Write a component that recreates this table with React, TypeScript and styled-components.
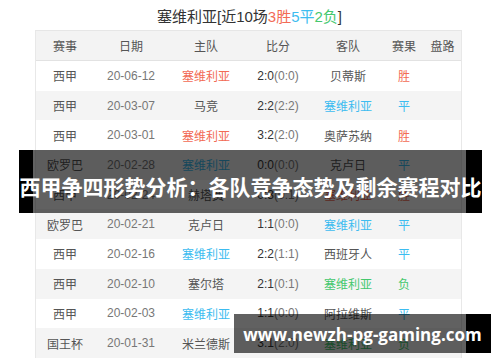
import styled, { createGlobalStyle } from "styled-components";

type Tone = "plain" | "win" | "draw" | "lose";

interface Match {
  league: string;
  date: string;
  home: string;
  homeTone: Tone;
  score: string;
  half: string;
  away: string;
  awayTone: Tone;
  result: string;
  resultTone: Tone;
}

const matches: Match[] = [
  { league: "西甲", date: "20-06-12", home: "塞维利亚", homeTone: "win", score: "2:0", half: "(0:0)", away: "贝蒂斯", awayTone: "plain", result: "胜", resultTone: "win" },
  { league: "西甲", date: "20-03-07", home: "马竞", homeTone: "plain", score: "2:2", half: "(2:2)", away: "塞维利亚", awayTone: "draw", result: "平", resultTone: "draw" },
  { league: "西甲", date: "20-03-01", home: "塞维利亚", homeTone: "win", score: "3:2", half: "(2:0)", away: "奥萨苏纳", awayTone: "plain", result: "胜", resultTone: "win" },
  { league: "欧罗巴", date: "20-02-28", home: "塞维利亚", homeTone: "draw", score: "0:0", half: "(0:0)", away: "克卢日", awayTone: "plain", result: "平", resultTone: "draw" },
  { league: "西甲", date: "20-02-24", home: "赫塔费", homeTone: "plain", score: "0:3", half: "(0:1)", away: "塞维利亚", awayTone: "win", result: "胜", resultTone: "win" },
  { league: "欧罗巴", date: "20-02-21", home: "克卢日", homeTone: "plain", score: "1:1", half: "(0:0)", away: "塞维利亚", awayTone: "draw", result: "平", resultTone: "draw" },
  { league: "西甲", date: "20-02-16", home: "塞维利亚", homeTone: "draw", score: "2:2", half: "(1:1)", away: "西班牙人", awayTone: "plain", result: "平", resultTone: "draw" },
  { league: "西甲", date: "20-02-10", home: "塞尔塔", homeTone: "plain", score: "2:1", half: "(0:1)", away: "塞维利亚", awayTone: "lose", result: "负", resultTone: "lose" },
  { league: "西甲", date: "20-02-03", home: "塞维利亚", homeTone: "draw", score: "1:1", half: "(0:0)", away: "阿拉维斯", awayTone: "plain", result: "平", resultTone: "draw" },
  { league: "国王杯", date: "20-01-31", home: "米兰德斯", homeTone: "plain", score: "3:1", half: "(2:0)", away: "塞维利亚", awayTone: "lose", result: "负", resultTone: "lose" },
];

const columns = "58px 74px 76px 68px 72px 40px 1fr";

export default function App() {
  return (
    <Page>
      <GlobalStyle />
      <Frame>
        <Title>
          塞维利亚[近10场<Colored $tone="win">3胜</Colored>
          <Colored $tone="draw">5平</Colored>
          <Colored $tone="lose">2负</Colored>]
        </Title>
        <Table>
          <HeadRow>
            <span>赛事</span>
            <span>日期</span>
            <span>主队</span>
            <span>比分</span>
            <span>客队</span>
            <span>赛果</span>
            <span>盘路</span>
          </HeadRow>
          {matches.map((m, i) => (
            <Row key={m.date} $striped={i % 2 === 1}>
              <Cell>{m.league}</Cell>
              <DateCell>{m.date}</DateCell>
              <Cell $tone={m.homeTone}>{m.home}</Cell>
              <Cell>
                <Score>{m.score}</Score>
                <Half>{m.half}</Half>
              </Cell>
              <Cell $tone={m.awayTone}>{m.away}</Cell>
              <Cell $tone={m.resultTone}>{m.result}</Cell>
              <Cell />
            </Row>
          ))}
        </Table>
      </Frame>

      <HeadlineBanner>
        <Strip $col={1} $dark />
        <Strip $col={2} />
        <Strip $col={3} $dark />
        <HeadlineText>西甲争四形势分析：各队竞争态势及剩余赛程对比</HeadlineText>
      </HeadlineBanner>

      <SiteBanner>
        <Strip $col={1} />
        <Strip $col={2} $dark />
        <SiteText>www.newzh-pg-gaming.com</SiteText>
      </SiteBanner>
    </Page>
  );
}

const toneColor: Record<Tone, string> = {
  plain: "#555",
  win: "#f26b55",
  draw: "#3dbcf0",
  lose: "#45c86e",
};

const GlobalStyle = createGlobalStyle`
  body {
    margin: 0;
    background: #fff;
    font-family: "Liberation Sans", "Noto Sans CJK SC", sans-serif;
  }
`;

const Page = styled.div`
  position: relative;
  width: 500px;
  height: 362px;
  overflow: hidden;
  background: #fff;
`;

const Frame = styled.div`
  width: 433px;
  margin-left: 33px;
`;

const Title = styled.div`
  height: 30px;
  line-height: 34px;
  text-align: center;
  font-size: 15px;
  color: #333;
`;

const Colored = styled.span<{ $tone: Tone }>`
  color: ${(p) => toneColor[p.$tone]};
`;

const Table = styled.div`
  margin: 0 4px 0 2px;
  border-left: 1px solid #e8e8e8;
  border-right: 1px solid #e8e8e8;
  border-top: 1px solid #e6e6e6;
`;

const HeadRow = styled.div`
  display: grid;
  grid-template-columns: ${columns};
  height: 29px;
  align-items: center;
  background: #f3f3f3;
  border-bottom: 1px solid #e2e2e2;
  font-size: 12px;
  color: #555;
  text-align: center;
`;

const Row = styled.div<{ $striped: boolean }>`
  display: grid;
  grid-template-columns: ${columns};
  height: 29.7px;
  align-items: center;
  background: ${(p) => (p.$striped ? "#f4f4f4" : "#fff")};
`;

const Cell = styled.div<{ $tone?: Tone }>`
  text-align: center;
  font-size: 12px;
  white-space: nowrap;
  color: ${(p) => toneColor[p.$tone ?? "plain"]};
`;

const DateCell = styled(Cell)`
  color: #777;
`;

const Score = styled.span`
  color: #333;
`;

const Half = styled.span`
  color: #777;
`;

const HeadlineBanner = styled.div`
  position: absolute;
  left: 19px;
  top: 150px;
  width: 463px;
  height: 63px;
  display: grid;
  grid-template-columns: 14px 433px 1fr;
  grid-template-rows: 1fr;
`;

const SiteBanner = styled.div`
  position: absolute;
  left: 234px;
  top: 314px;
  width: 257px;
  height: 39px;
  display: grid;
  grid-template-columns: 232px 1fr;
  grid-template-rows: 1fr;
`;

const Strip = styled.div<{ $col: number; $dark?: boolean }>`
  grid-row: 1;
  grid-column: ${(p) => p.$col};
  background: ${(p) => (p.$dark ? "#000" : "rgba(0, 0, 0, 0.62)")};
`;

const HeadlineText = styled.div`
  grid-row: 1;
  grid-column: 1 / -1;
  align-self: center;
  padding-top: 8px;
  text-align: center;
  color: #fff;
  font-family: "Noto Sans CJK SC", sans-serif;
  font-weight: 700;
  font-size: 21px;
  white-space: nowrap;
`;

const SiteText = styled.div`
  grid-row: 1;
  grid-column: 1 / -1;
  align-self: center;
  padding-top: 2px;
  text-align: center;
  color: #fff;
  font-family: "Open Sans", sans-serif;
  font-weight: 700;
  font-size: 17px;
  white-space: nowrap;
`;
